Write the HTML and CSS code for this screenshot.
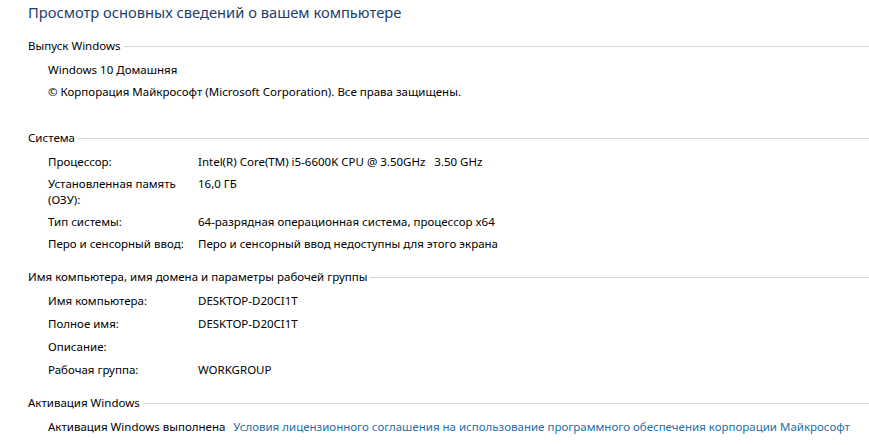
FILE: index.html
```html
<!DOCTYPE html>
<html lang="ru">
<head>
  <meta charset="UTF-8"/>
  <title>Система</title>
  <link rel="stylesheet" href="styles.css">
</head>
<body>
  <div class="page">
    <h1>Просмотр основных сведений о вашем компьютере</h1>

    <div class="section edition">
      <div class="section-title"><span>Выпуск Windows</span></div>
      <div class="line">Windows 10 Домашняя</div>
      <div class="line">© Корпорация Майкрософт (Microsoft Corporation). Все права защищены.</div>
    </div>

    <div class="section">
      <div class="section-title"><span>Система</span></div>
      <div class="row"><div class="label">Процессор:</div><div class="value">Intel(R) Core(TM) i5-6600K CPU @ 3.50GHz &nbsp; 3.50 GHz</div></div>
      <div class="row"><div class="label">Установленная память (ОЗУ):</div><div class="value">16,0 ГБ</div></div>
      <div class="row"><div class="label">Тип системы:</div><div class="value">64-разрядная операционная система, процессор x64</div></div>
      <div class="row"><div class="label">Перо и сенсорный ввод:</div><div class="value">Перо и сенсорный ввод недоступны для этого экрана</div></div>
    </div>

    <div class="section computer">
      <div class="section-title"><span>Имя компьютера, имя домена и параметры рабочей группы</span></div>
      <div class="row"><div class="label">Имя компьютера:</div><div class="value">DESKTOP-D20CI1T</div></div>
      <div class="row"><div class="label">Полное имя:</div><div class="value">DESKTOP-D20CI1T</div></div>
      <div class="row"><div class="label">Описание:</div><div class="value"></div></div>
      <div class="row"><div class="label">Рабочая группа:</div><div class="value">WORKGROUP</div></div>
    </div>

    <div class="section">
      <div class="section-title"><span>Активация Windows</span></div>
      <div class="row activation">
        <div>Активация Windows выполнена</div>
        <a href="#">Условия лицензионного соглашения на использование программного обеспечения корпорации Майкрософт</a>
      </div>
    </div>
  </div>
</body>
</html>
```

FILE: styles.css
```css
body {
  margin: 0;
  background: #fff;
  color: #000;
  font-family: "Noto Sans", sans-serif;
  font-size: 11.5px;
  line-height: 16px;
}

.page {
  padding: 0 0 0 28px;
}

h1 {
  margin: 0 0 14px;
  font-size: 14.7px;
  font-weight: normal;
  line-height: 24px;
  color: #1e3e6b;
}

.section {
  margin-bottom: 17px;
}

.section.edition {
  margin-bottom: 30px;
}

.section-title {
  display: flex;
  align-items: center;
  gap: 3px;
  margin-bottom: 8px;
}

.section-title::after {
  content: "";
  flex: 1;
  border-top: 1px solid #d5d5d5;
}

.line {
  padding-left: 20px;
  margin-bottom: 6px;
}

.row {
  display: flex;
  padding-left: 20px;
  margin-bottom: 6px;
}

.computer .row {
  margin-bottom: 7px;
}

.label {
  width: 150px;
  flex-shrink: 0;
}

.activation {
  gap: 8px;
  white-space: nowrap;
}

.activation a {
  color: #1f6fa7;
  text-decoration: none;
}
```
